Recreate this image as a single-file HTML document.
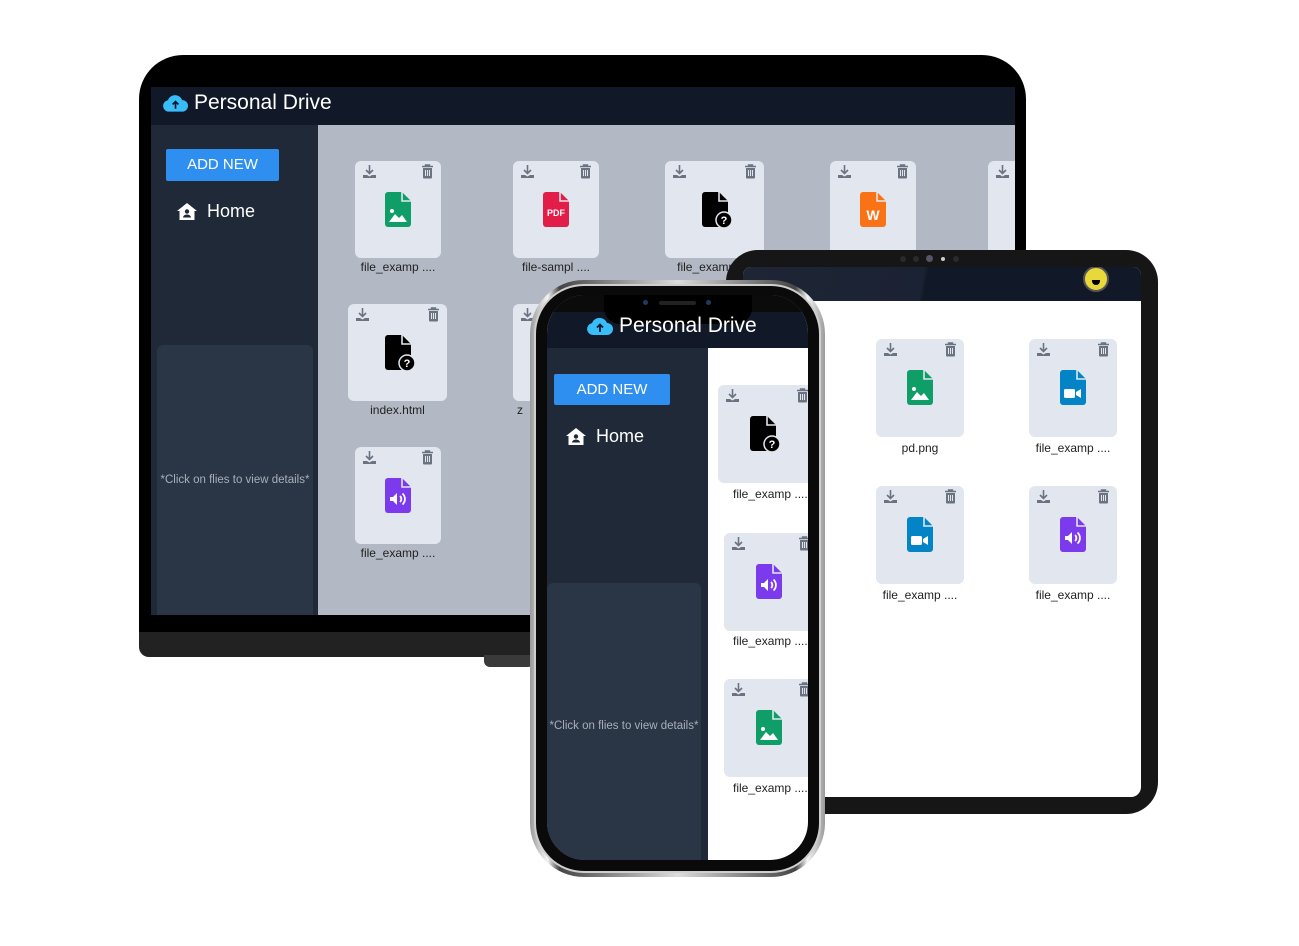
<!DOCTYPE html>
<html><head><meta charset="utf-8">
<style>
*{margin:0;padding:0;box-sizing:border-box}
body{width:1299px;height:946px;background:#fff;position:relative;overflow:hidden;font-family:"Liberation Sans",sans-serif}
.abs{position:absolute}
.card{position:absolute;background:#e2e7ef;border-radius:6px;overflow:hidden}
.card .dl{position:absolute;left:7px;top:3px;width:15px;height:15px}
.card .tr{position:absolute;right:7px;top:3px;width:13px;height:15px}
.card .doc{position:absolute;left:50%;margin-left:-13px;top:31px;width:26px;height:35px;overflow:visible}
.lbl{position:absolute;font-size:12px;color:#222;text-align:center;white-space:nowrap}
.btn{position:absolute;background:#2f8ff0;color:#fff;font-size:15px;text-align:center;border-radius:2px}
.home{position:absolute;color:#fff;font-size:18px;display:flex;align-items:center;gap:10px}
.panel{position:absolute;background:#2a3545;border-radius:6px;color:#a8afba;font-size:11.5px;text-align:center}
</style></head><body>
<svg width="0" height="0" style="position:absolute">
<defs>
<symbol id="dl" viewBox="0 0 15 15"><path d="M7.5 1v8M4 6l3.5 3.5L11 6" stroke="#6b7280" stroke-width="1.6" fill="none"/><path d="M1 11h4l2.5 1.5L10 11h4v3H1z" fill="#6b7280"/></symbol>
<symbol id="tr" viewBox="0 0 13 15"><path d="M1 2.5h11M4.5 2.5V1h4v1.5" stroke="#6b7280" stroke-width="1.4" fill="none"/><path d="M2 4h9v9.5a1 1 0 0 1-1 1H3a1 1 0 0 1-1-1z" fill="#6b7280"/><path d="M4.5 6v6M6.5 6v6M8.5 6v6" stroke="#e2e7ef" stroke-width="1"/></symbol>
<symbol id="docs" viewBox="0 0 26 35" overflow="visible"><path d="M3 0h14l9 9v23a3 3 0 0 1-3 3H3a3 3 0 0 1-3-3V3a3 3 0 0 1 3-3z"/><path d="M17 -1v10h10" fill="none" stroke="#e2e7ef" stroke-width="1.6"/></symbol>
<symbol id="cloud" viewBox="0 0 26 18"><path d="M6 18a6 6 0 0 1-1-11.9A8 8 0 0 1 20 6a6 6 0 0 1 0 12z" fill="#38bdf8"/><path d="M13 15V8M10 10.5l3-3 3 3" stroke="#0f172a" stroke-width="1.8" fill="none"/></symbol>
<symbol id="house" viewBox="0 0 20 17"><path d="M10 0L0 8h2.5v9h15V8H20z" fill="#fff"/><circle cx="10" cy="8.5" r="2.2" fill="#1f2937"/><path d="M6 14.5a4 3 0 0 1 8 0z" fill="#1f2937"/></symbol>
</defs></svg>

<!-- LAPTOP -->
<div class="abs" style="left:139px;top:632px;width:400px;height:25px;background:#222;border-radius:0 0 0 10px"></div>
<div class="abs" style="left:484px;top:655px;width:50px;height:12px;background:#3a3a3a;border-radius:0 0 6px 6px"></div>
<div class="abs" style="left:139px;top:55px;width:887px;height:577px;background:#000;border-radius:44px 44px 0 0"></div>
<div class="abs" style="left:151px;top:87px;width:864px;height:528px;background:#b3b9c4;overflow:hidden">
  <div class="abs" style="left:0;top:0;width:864px;height:38px;background:#111827"></div>
  <svg class="abs" style="left:12px;top:7px;width:25px;height:18px"><use href="#cloud"/></svg>
  <div class="abs" style="left:43px;top:3px;color:#fff;font-size:21px;line-height:26px">Personal Drive</div>
  <div class="abs" style="left:0;top:38px;width:167px;height:490px;background:#1f2937"></div>
  <div class="btn" style="left:15px;top:62px;width:113px;height:32px;line-height:32px">ADD NEW</div>
  <div class="home" style="left:26px;top:114px"><svg width="20" height="17"><use href="#house"/></svg><span>Home</span></div>
  <div class="panel" style="left:6px;top:258px;width:156px;height:280px;padding-top:129px">*Click on flies to view details*</div>

  <div class="card" style="left:204px;top:74px;width:86px;height:97px"><svg class="dl"><use href="#dl"/></svg><svg class="tr"><use href="#tr"/></svg><svg class="doc" viewBox="0 0 26 35" fill="#0f9d68"><use href="#docs"/><circle cx="7" cy="19" r="2" fill="#fff"/><path d="M4 30l6-8 4 4 3-3 5 7z" fill="#fff"/></svg></div>
  <div class="lbl" style="left:204px;top:173px;width:86px">file_examp ....</div>
  <div class="card" style="left:362px;top:74px;width:86px;height:97px"><svg class="dl"><use href="#dl"/></svg><svg class="tr"><use href="#tr"/></svg><svg class="doc" viewBox="0 0 26 35" fill="#e11d48"><use href="#docs"/><text x="13" y="24" font-size="9" font-weight="bold" fill="#fff" text-anchor="middle" font-family="Liberation Sans">PDF</text></svg></div>
  <div class="lbl" style="left:362px;top:173px;width:86px">file-sampl ....</div>
  <div class="card" style="left:514px;top:74px;width:99px;height:97px"><svg class="dl"><use href="#dl"/></svg><svg class="tr"><use href="#tr"/></svg><svg class="doc" viewBox="0 0 26 35" fill="#000"><use href="#docs"/><circle cx="22" cy="28" r="8" fill="#000" stroke="#e2e7ef" stroke-width="1.5"/><text x="22" y="32" font-size="11" font-weight="bold" fill="#fff" text-anchor="middle" font-family="Liberation Sans">?</text></svg></div>
  <div class="lbl" style="left:514px;top:173px;width:99px">file_examp ....</div>
  <div class="card" style="left:679px;top:74px;width:86px;height:97px"><svg class="dl"><use href="#dl"/></svg><svg class="tr"><use href="#tr"/></svg><svg class="doc" viewBox="0 0 26 35" fill="#f97316"><use href="#docs"/><text x="13" y="28" font-size="14" font-weight="bold" fill="#fff" text-anchor="middle" font-family="Liberation Sans">W</text></svg></div>
  <div class="card" style="left:837px;top:74px;width:86px;height:97px"><svg class="dl"><use href="#dl"/></svg></div>

  <div class="card" style="left:197px;top:217px;width:99px;height:97px"><svg class="dl"><use href="#dl"/></svg><svg class="tr"><use href="#tr"/></svg><svg class="doc" viewBox="0 0 26 35" fill="#000"><use href="#docs"/><circle cx="22" cy="28" r="8" fill="#000" stroke="#e2e7ef" stroke-width="1.5"/><text x="22" y="32" font-size="11" font-weight="bold" fill="#fff" text-anchor="middle" font-family="Liberation Sans">?</text></svg></div>
  <div class="lbl" style="left:197px;top:316px;width:99px">index.html</div>
  <div class="card" style="left:362px;top:217px;width:86px;height:97px"><svg class="dl"><use href="#dl"/></svg></div>
  <div class="lbl" style="left:366px;top:316px">z</div>

  <div class="card" style="left:204px;top:360px;width:86px;height:97px"><svg class="dl"><use href="#dl"/></svg><svg class="tr"><use href="#tr"/></svg><svg class="doc" viewBox="0 0 26 35" fill="#7c3aed"><use href="#docs"/><path d="M5 19h3l4-4v12l-4-4H5z" fill="#fff"/><path d="M15 18a4 4 0 0 1 0 6M17.5 15.5a7.5 7.5 0 0 1 0 11" stroke="#fff" stroke-width="1.8" fill="none"/></svg></div>
  <div class="lbl" style="left:204px;top:459px;width:86px">file_examp ....</div>
</div>

<!-- TABLET -->
<div class="abs" style="left:726px;top:250px;width:432px;height:564px;background:#161616;border-radius:32px"></div>
<div class="abs" style="left:900px;top:256px;width:6px;height:6px;border-radius:50%;background:#2a2a2a"></div>
<div class="abs" style="left:913px;top:256px;width:6px;height:6px;border-radius:50%;background:#2a2a2a"></div>
<div class="abs" style="left:926px;top:255px;width:7px;height:7px;border-radius:50%;background:#556"></div>
<div class="abs" style="left:941px;top:257px;width:4px;height:4px;border-radius:50%;background:#ccc"></div>
<div class="abs" style="left:953px;top:256px;width:6px;height:6px;border-radius:50%;background:#2a2a2a"></div>
<div class="abs" style="left:743px;top:267px;width:398px;height:530px;background:#fff;border-radius:8px 8px 10px 10px;overflow:hidden">
  <div class="abs" style="left:0;top:0;width:398px;height:34px;background:linear-gradient(100deg,#1e2535 0%,#1b2233 45%,#111827 46%,#111827 100%)"></div>
  <div class="abs" style="left:340px;top:-1px;width:26px;height:26px;border-radius:50%;background:#e8d93a;border:2px solid #555"></div>
  <div class="abs" style="left:349px;top:13px;width:8px;height:5px;border-radius:0 0 5px 5px;background:#000"></div>
  <div class="card" style="left:133px;top:72px;width:88px;height:98px"><svg class="dl"><use href="#dl"/></svg><svg class="tr"><use href="#tr"/></svg><svg class="doc" viewBox="0 0 26 35" fill="#0f9d68"><use href="#docs"/><circle cx="7" cy="19" r="2" fill="#fff"/><path d="M4 30l6-8 4 4 3-3 5 7z" fill="#fff"/></svg></div>
  <div class="lbl" style="left:133px;top:174px;width:88px">pd.png</div>
  <div class="card" style="left:286px;top:72px;width:88px;height:98px"><svg class="dl"><use href="#dl"/></svg><svg class="tr"><use href="#tr"/></svg><svg class="doc" viewBox="0 0 26 35" fill="#0284c7"><use href="#docs"/><rect x="4" y="19" width="11" height="9" rx="1.5" fill="#fff"/><path d="M16 22l5-3v9l-5-3z" fill="#fff"/></svg></div>
  <div class="lbl" style="left:286px;top:174px;width:88px">file_examp ....</div>
  <div class="card" style="left:133px;top:219px;width:88px;height:98px"><svg class="dl"><use href="#dl"/></svg><svg class="tr"><use href="#tr"/></svg><svg class="doc" viewBox="0 0 26 35" fill="#0284c7"><use href="#docs"/><rect x="4" y="19" width="11" height="9" rx="1.5" fill="#fff"/><path d="M16 22l5-3v9l-5-3z" fill="#fff"/></svg></div>
  <div class="lbl" style="left:133px;top:321px;width:88px">file_examp ....</div>
  <div class="card" style="left:286px;top:219px;width:88px;height:98px"><svg class="dl"><use href="#dl"/></svg><svg class="tr"><use href="#tr"/></svg><svg class="doc" viewBox="0 0 26 35" fill="#7c3aed"><use href="#docs"/><path d="M5 19h3l4-4v12l-4-4H5z" fill="#fff"/><path d="M15 18a4 4 0 0 1 0 6M17.5 15.5a7.5 7.5 0 0 1 0 11" stroke="#fff" stroke-width="1.8" fill="none"/></svg></div>
  <div class="lbl" style="left:286px;top:321px;width:88px">file_examp ....</div>
</div>

<!-- PHONE -->
<div class="abs" style="left:530px;top:280px;width:295px;height:597px;border-radius:54px;background:linear-gradient(90deg,#9a9a9a,#f4f4f4 6%,#444 10%,#ddd 50%,#444 90%,#f4f4f4 94%,#9a9a9a)"></div>
<div class="abs" style="left:534px;top:284px;width:287px;height:589px;border-radius:50px;background:#0a0a0a;border:2px solid #cfcfcf"></div>
<div class="abs" style="left:547px;top:295px;width:261px;height:565px;border-radius:38px;background:#fff;overflow:hidden">
  <div class="abs" style="left:0;top:0;width:261px;height:53px;background:#111827"></div>
  <div class="abs" style="left:0;top:0;width:261px;height:17px;background:#0b0b0b"></div>
  <div class="abs" style="left:57px;top:0;width:148px;height:29px;background:#000;border-radius:0 0 16px 16px"></div>
  <div class="abs" style="left:96px;top:5px;width:5px;height:5px;border-radius:50%;background:#1e3a5f"></div>
  <div class="abs" style="left:112px;top:6px;width:37px;height:4px;border-radius:2px;background:#222"></div>
  <div class="abs" style="left:159px;top:5px;width:5px;height:5px;border-radius:50%;background:#1e3a5f"></div>
  <svg class="abs" style="left:40px;top:22px;width:26px;height:18px"><use href="#cloud"/></svg>
  <div class="abs" style="left:72px;top:18px;color:#fff;font-size:21px;line-height:26px">Personal Drive</div>
  <div class="abs" style="left:0;top:53px;width:161px;height:520px;background:#1f2937"></div>
  <div class="btn" style="left:7px;top:79px;width:116px;height:31px;line-height:31px">ADD NEW</div>
  <div class="home" style="left:19px;top:131px"><svg width="20" height="17"><use href="#house"/></svg><span>Home</span></div>
  <div class="panel" style="left:0;top:288px;width:154px;height:290px;padding-top:137px;border-radius:6px 6px 0 0">*Click on flies to view details*</div>
  <div class="card" style="left:171px;top:90px;width:100px;height:98px"><svg class="dl"><use href="#dl"/></svg><svg class="tr" style="right:9px"><use href="#tr"/></svg><svg class="doc" viewBox="0 0 26 35" fill="#000" style="left:32px;margin-left:0"><use href="#docs"/><circle cx="22" cy="28" r="8" fill="#000" stroke="#e2e7ef" stroke-width="1.5"/><text x="22" y="32" font-size="11" font-weight="bold" fill="#fff" text-anchor="middle" font-family="Liberation Sans">?</text></svg></div>
  <div class="lbl" style="left:186px;top:192px">file_examp ....</div>
  <div class="card" style="left:177px;top:238px;width:96px;height:98px"><svg class="dl"><use href="#dl"/></svg><svg class="tr" style="right:9px"><use href="#tr"/></svg><svg class="doc" viewBox="0 0 26 35" fill="#7c3aed" style="left:32px;margin-left:0"><use href="#docs"/><path d="M5 19h3l4-4v12l-4-4H5z" fill="#fff"/><path d="M15 18a4 4 0 0 1 0 6M17.5 15.5a7.5 7.5 0 0 1 0 11" stroke="#fff" stroke-width="1.8" fill="none"/></svg></div>
  <div class="lbl" style="left:186px;top:339px">file_examp ....</div>
  <div class="card" style="left:177px;top:384px;width:96px;height:98px"><svg class="dl"><use href="#dl"/></svg><svg class="tr" style="right:9px"><use href="#tr"/></svg><svg class="doc" viewBox="0 0 26 35" fill="#0f9d68" style="left:32px;margin-left:0"><use href="#docs"/><circle cx="7" cy="19" r="2" fill="#fff"/><path d="M4 30l6-8 4 4 3-3 5 7z" fill="#fff"/></svg></div>
  <div class="lbl" style="left:186px;top:486px">file_examp ....</div>
</div>
</body></html>
